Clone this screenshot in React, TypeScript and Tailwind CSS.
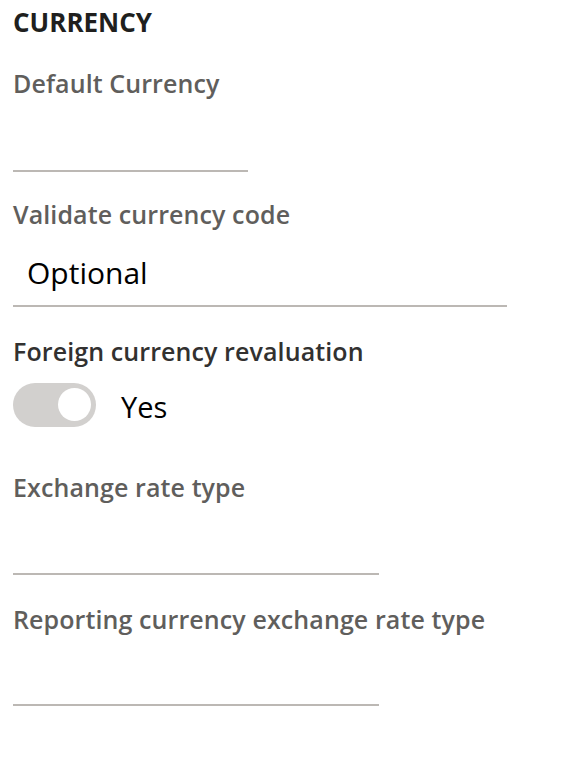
import React from 'react';

const font = { fontFamily: '"Open Sans", "Noto Sans", sans-serif' };

const Label = ({ children, dark = false }: { children: React.ReactNode; dark?: boolean }) => (
  <div className={`text-[25px] leading-[34px] font-semibold tracking-[0.1px] ${dark ? 'text-[#323130]' : 'text-[#605e5c]'}`}>{children}</div>
);

export default function App() {
  return (
    <div className="w-[578px] h-[770px] bg-white pl-[13px] pt-[5px]" style={font}>
      <div className="text-[26px] leading-[34px] font-bold text-[#201f1e]">CURRENCY</div>

      <div className="mt-[27px]">
        <Label>Default Currency</Label>
        <div className="w-[235px] h-[72px] border-b-2 border-[#bcb8b4]" />
      </div>

      <div className="mt-[25px]">
        <Label>Validate currency code</Label>
        <div className="w-[494px] h-[76px] border-b-2 border-[#bcb8b4] flex items-center pl-[14px] pt-[8px] text-[30px] text-black">
          Optional
        </div>
      </div>

      <div className="mt-[27px]">
        <Label dark>Foreign currency revaluation</Label>
      </div>
      <div className="mt-[14px] flex items-center">
        <div className="w-[83px] h-[44px] rounded-full bg-[#d2d0ce] flex items-center justify-end pr-[5px]">
          <div className="w-[33px] h-[33px] rounded-full bg-white" />
        </div>
        <span className="ml-[25px] mt-[5px] text-[29px] leading-[40px] text-black">Yes</span>
      </div>

      <div className="mt-[43px]">
        <Label>Exchange rate type</Label>
        <div className="w-[366px] h-[71px] border-b-2 border-[#bcb8b4]" />
      </div>

      <div className="mt-[27px]">
        <Label>Reporting currency exchange rate type</Label>
        <div className="w-[366px] h-[70px] border-b-2 border-[#bcb8b4]" />
      </div>
    </div>
  );
}
